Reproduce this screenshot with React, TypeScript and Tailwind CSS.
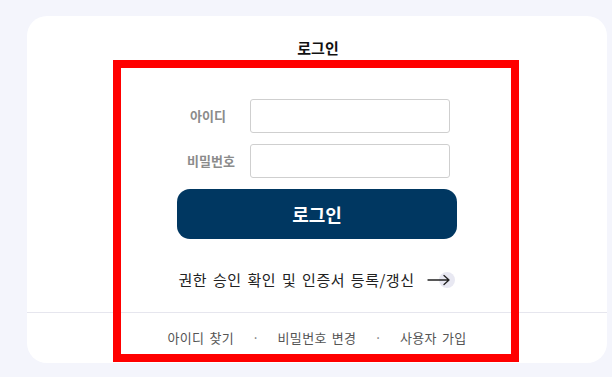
import React from 'react';

const font = { fontFamily: '"Noto Sans CJK KR", "Noto Sans", sans-serif' };

function ArrowCircle() {
  return (
    <span className="relative inline-flex items-center w-[28px] h-[18px]">
      <span className="absolute right-0 top-[1px] w-[16px] h-[16px] rounded-full bg-[#e8e8f2]" />
      <svg className="relative" width="24" height="12" viewBox="0 0 24 12" fill="none">
        <path d="M1 6h21M17 1.5L22 6l-5 4.5" stroke="#222" strokeWidth="1.3" strokeLinecap="round" strokeLinejoin="round" />
      </svg>
    </span>
  );
}

export default function App() {
  return (
    <div className="w-[612px] h-[377px] bg-[#f4f5fc] pt-[16px] pl-[27px] pr-[5px] overflow-hidden" style={font}>
      <div className="relative w-[580px] h-[347px] bg-white rounded-[20px] flex flex-col items-center">
        <h1 className="mt-[22px] text-[15px] leading-[20px] font-bold text-[#111] ml-[2px]">로그인</h1>

        <div className="mt-[41px] w-[280px] flex flex-col">
          <div className="flex items-center gap-[5px]">
            <span className="w-[68px] text-center text-[13px] font-bold text-[#8b8b8b] pr-[6px]">아이디</span>
            <input className="w-[200px] h-[34px] border border-[#cfcfcf] rounded-[3px] bg-white outline-none" />
          </div>
          <div className="flex items-center gap-[5px] mt-[11px]">
            <span className="w-[68px] text-center text-[13px] font-bold text-[#8b8b8b]">비밀번호</span>
            <input type="password" className="w-[200px] h-[34px] border border-[#cfcfcf] rounded-[3px] bg-white outline-none" />
          </div>
          <button className="mt-[11px] w-[280px] h-[50px] rounded-[13px] bg-[#003761] text-white text-[18px] font-bold">
            로그인
          </button>
        </div>

        <div className="mt-[30px] h-[22px] flex items-center gap-[13px] text-[15px] tracking-[0.5px] [word-spacing:2px] text-[#222]">
          <span>권한 승인 확인 및 인증서 등록/갱신</span>
          <ArrowCircle />
        </div>

        <div className="mt-[21px] w-full border-t border-[#e6e6ee]" />

        <div className="mt-[16px] h-[18px] flex items-center text-[13px] tracking-[0.3px] [word-spacing:2px] text-[#555]">
          <span>아이디 찾기</span>
          <span className="mx-[18px] text-[#777]">·</span>
          <span>비밀번호 변경</span>
          <span className="mx-[18px] text-[#777]">·</span>
          <span>사용자 가입</span>
        </div>

        <div className="absolute left-[86px] top-[44px] w-[406px] h-[302px] border-[8px] border-[#ff0000] pointer-events-none" />
      </div>
    </div>
  );
}
